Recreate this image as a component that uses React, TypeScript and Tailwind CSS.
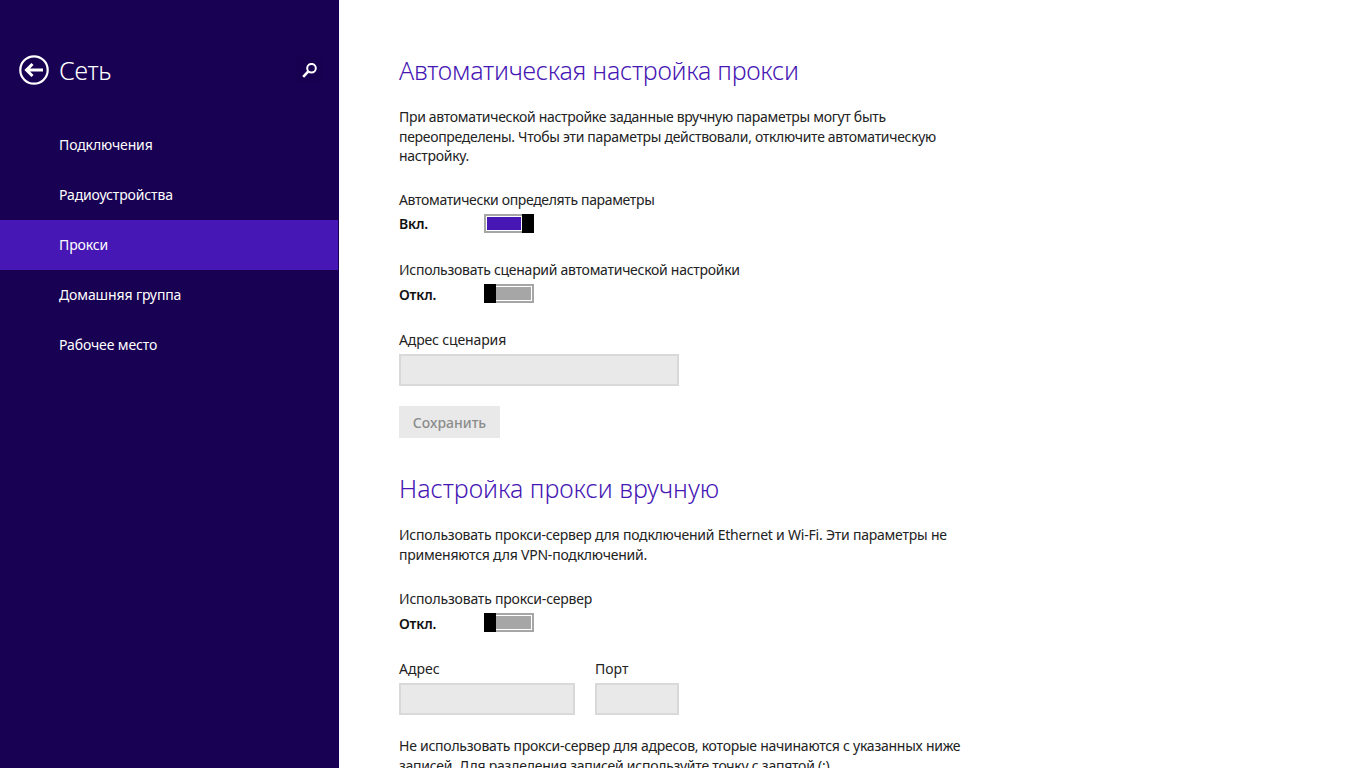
const uiFont = "font-['Noto_Sans',sans-serif]"

const navItems = ['Подключения', 'Радиоустройства', 'Прокси', 'Домашняя группа', 'Рабочее место']

function Toggle({ on, label }: { on: boolean; label: string }) {
  return (
    <div className="flex h-[20px] items-center">
      <span className="w-[85px] pt-[2px] text-[14px] font-semibold tracking-[-0.2px] text-[#111]">{label}</span>
      <div className={`flex h-[19px] w-[50px] ${on ? 'flex-row-reverse' : ''}`}>
        <div className="h-full w-[12px] bg-black" />
        {/* track has no gray edge on the thumb side */}
        <div className={`flex-1 border-y-2 border-[#a6a6a6] bg-white py-px ${on ? 'border-l-2 pl-px pr-px' : 'border-r-2 pr-px'}`}>
          <div className={`h-full w-full ${on ? 'bg-[#4617b4]' : 'bg-[#a6a6a6]'}`} />
        </div>
      </div>
    </div>
  )
}

function Field({ className }: { className: string }) {
  return <div className={`h-[32px] border-2 border-[#d9d9d9] bg-[#e9e9e9] ${className}`} />
}

export default function App() {
  return (
    <div className={`flex h-[768px] w-[1364px] overflow-hidden bg-white ${uiFont}`}>
      <aside className="h-full w-[339px] shrink-0 bg-[#180052] text-white">
        <div className="flex h-[120px] items-start pl-[19px] pr-[16px] pt-[55px]">
          <svg width="30" height="30" viewBox="0 0 30 30" fill="none" stroke="white">
            <circle cx="15" cy="15" r="13.7" strokeWidth="2.2" />
            <path d="M24 15H8M13.5 9 7.5 15l6 6" strokeWidth="3" />
          </svg>
          <h1 className="ml-[10px] text-[25px] font-light leading-[30px] tracking-[-0.3px]">Сеть</h1>
          <div className="ml-auto mt-[2px] flex h-[27px] w-[27px] items-center justify-center bg-[#17004f]">
            <svg width="16" height="16" viewBox="0 0 16 16" fill="none" stroke="white">
              <circle cx="9.5" cy="5.2" r="4.3" strokeWidth="2" />
              <path d="M6.3 8.4 1.2 13.8" strokeWidth="2.6" />
            </svg>
          </div>
        </div>
        <nav className="tracking-[-0.12px]">
          {navItems.map((item) => (
            <div
              key={item}
              className={`flex h-[50px] w-[338px] items-center pb-[2px] pl-[59px] text-[14px] ${item === 'Прокси' ? 'bg-[#4617b4]' : ''}`}
            >
              {item}
            </div>
          ))}
        </nav>
      </aside>
      <main className="w-[570px] pl-[60px] pt-[52px] text-[14px] leading-[19.5px] tracking-[-0.25px] text-[#222]">
        <h2 className="text-[25px] font-light leading-[36px] tracking-[-0.25px] text-[#4617b4]">Автоматическая настройка прокси</h2>
        <p className="mt-[19px] w-[565px] tracking-[-0.31px]">
          При автоматической настройке заданные вручную параметры могут быть переопределены. Чтобы эти параметры действовали, отключите автоматическую настройку.
        </p>
        <div className="mt-[24px] tracking-[-0.35px]">Автоматически определять параметры</div>
        <div className="mt-[4px]"><Toggle on label="Вкл." /></div>
        <div className="mt-[27px] tracking-[-0.28px]">Использовать сценарий автоматической настройки</div>
        <div className="mt-[4px]"><Toggle on={false} label="Откл." /></div>
        <div className="mt-[26px] tracking-[-0.14px]">Адрес сценария</div>
        <Field className="mt-[5px] w-[280px]" />
        <button className="mt-[20px] block h-[32px] w-[101px] bg-[#e9e9e9] pt-[1px] text-center font-medium tracking-normal text-[#8c8c8c]">Сохранить</button>
        <h2 className="mt-[32px] text-[25px] font-light leading-[36px] tracking-normal text-[#4617b4]">Настройка прокси вручную</h2>
        <p className="mt-[19px] w-[565px] tracking-[-0.22px]">
          Использовать прокси-сервер для подключений Ethernet и Wi-Fi. Эти параметры не применяются для VPN-подключений.
        </p>
        <div className="mt-[25px] tracking-[-0.2px]">Использовать прокси-сервер</div>
        <div className="mt-[4px]"><Toggle on={false} label="Откл." /></div>
        <div className="mt-[26px] flex gap-[20px] tracking-normal">
          <div>
            <div>Адрес</div>
            <Field className="mt-[5px] w-[176px]" />
          </div>
          <div>
            <div>Порт</div>
            <Field className="mt-[5px] w-[84px]" />
          </div>
        </div>
        <p className="mt-[21px] w-[565px] tracking-[-0.25px]">
          Не использовать прокси-сервер для адресов, которые начинаются с указанных ниже записей. Для разделения записей используйте точку с запятой (;).
        </p>
      </main>
    </div>
  )
}
